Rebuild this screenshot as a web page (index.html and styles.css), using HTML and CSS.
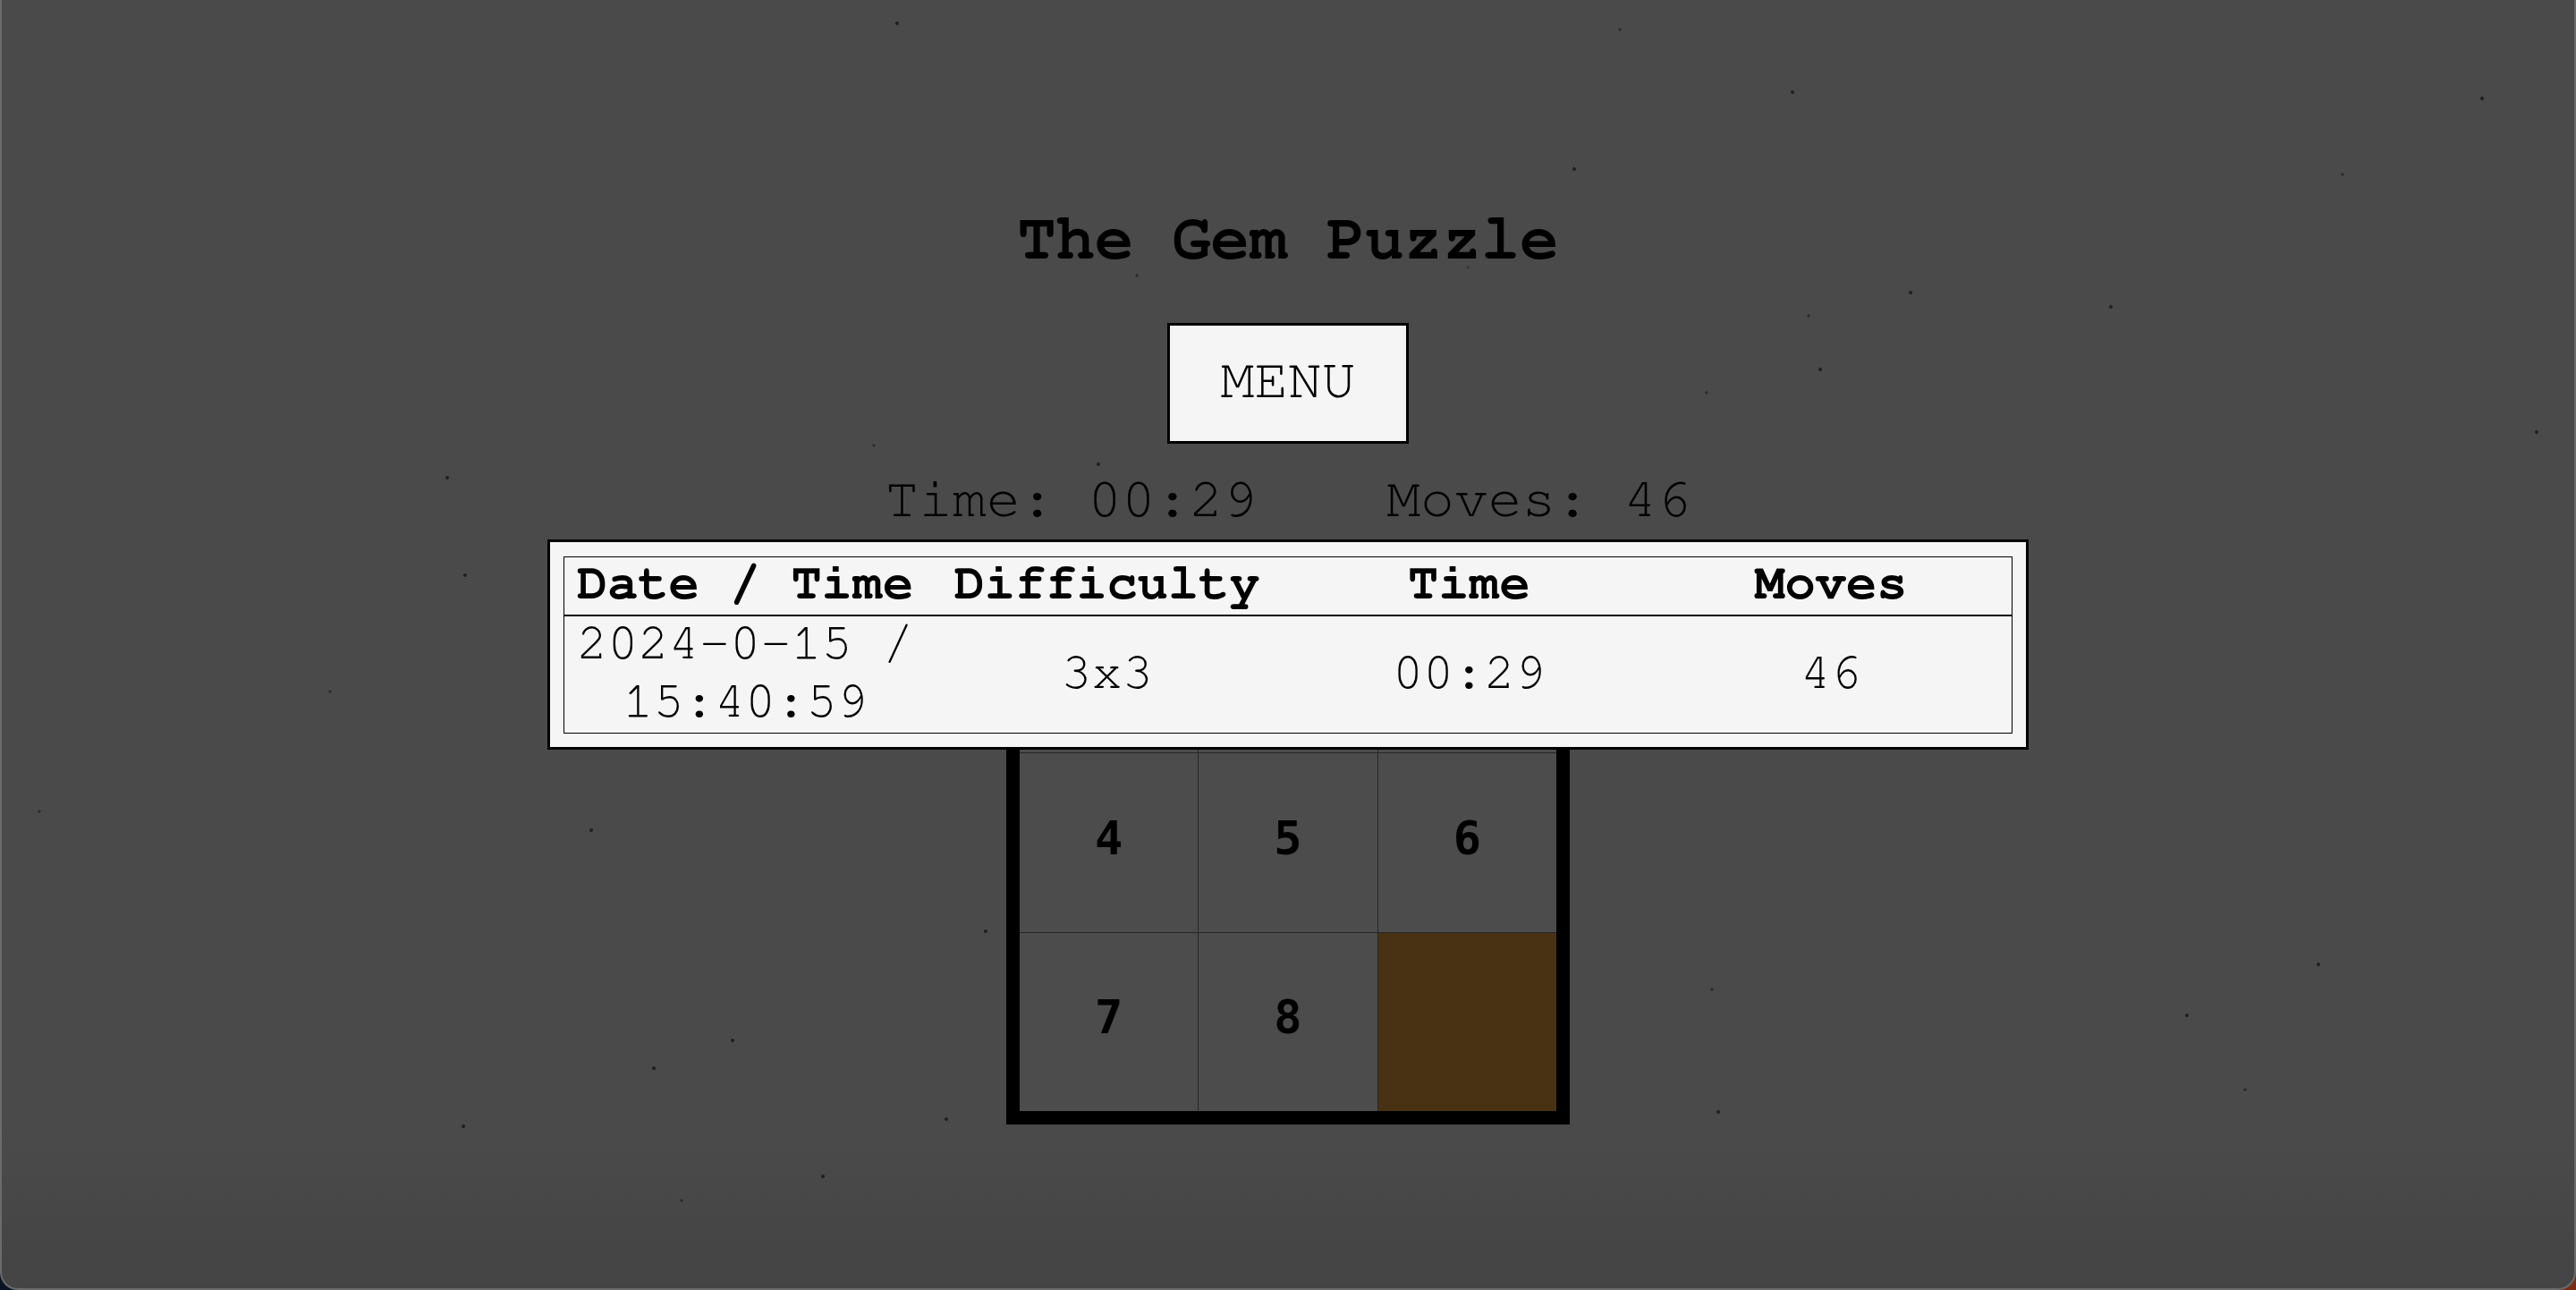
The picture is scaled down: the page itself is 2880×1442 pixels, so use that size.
FILE: index.html
```html
<!DOCTYPE html>
<html lang="en">
<head>
<meta charset="utf-8">
<title>The Gem Puzzle</title>
<link rel="stylesheet" href="styles.css">
</head>
<body>
<div class="window">
  <main class="game">
    <h1 class="title">The Gem Puzzle</h1>
    <button class="menu-btn" type="button">MENU</button>
    <div class="stats">
      <span class="stat">Time: 00:29</span>
      <span class="stat">Moves: 46</span>
    </div>
    <div class="board">
      <div class="tile">1</div>
      <div class="tile">2</div>
      <div class="tile">3</div>
      <div class="tile">4</div>
      <div class="tile">5</div>
      <div class="tile">6</div>
      <div class="tile">7</div>
      <div class="tile">8</div>
      <div class="tile tile-empty"></div>
    </div>
    <div class="results">
      <table class="results-table">
        <thead>
          <tr>
            <th>Date / Time</th>
            <th>Difficulty</th>
            <th>Time</th>
            <th>Moves</th>
          </tr>
        </thead>
        <tbody>
          <tr>
            <td><div class="cell-text">2024-0-15 / 15:40:59</div></td>
            <td><div class="cell-text">3x3</div></td>
            <td><div class="cell-text">00:29</div></td>
            <td><div class="cell-text">46</div></td>
          </tr>
        </tbody>
      </table>
    </div>
  </main>
</div>
</body>
</html>
```

FILE: styles.css
```css
html, body {
  margin: 0;
  padding: 0;
}

body {
  width: 2880px;
  height: 1442px;
  overflow: hidden;
  background: linear-gradient(90deg, #0a1524 0%, #1a1a22 50%, #7a2c12 100%);
  font-family: "Nimbus Mono PS", "Nimbus Mono L", "FreeMono", "Liberation Mono", "Courier New", monospace;
  color: #000;
}

.window {
  box-sizing: border-box;
  width: 2880px;
  height: 1442px;
  border-left: 2px solid #6b6b6b;
  border-right: 2px solid #6b6b6b;
  border-bottom: 2px solid #6b6b6b;
  border-radius: 0 0 20px 20px;
  overflow: hidden;
  background-color: #4a4a4a;
  background-image:
    radial-gradient(circle at 1001px 26px, #202020 0 1.6px, transparent 2.4px),
    radial-gradient(circle at 1809px 33px, #2a2a2a 0 1.2px, transparent 2px),
    radial-gradient(circle at 2002px 103px, #222 0 1.6px, transparent 2.4px),
    radial-gradient(circle at 2773px 110px, #222 0 1.6px, transparent 2.4px),
    radial-gradient(circle at 1758px 189px, #222 0 1.6px, transparent 2.4px),
    radial-gradient(circle at 2617px 195px, #2a2a2a 0 1.2px, transparent 2px),
    radial-gradient(circle at 2134px 327px, #222 0 1.6px, transparent 2.4px),
    radial-gradient(circle at 2358px 343px, #222 0 1.6px, transparent 2.4px),
    radial-gradient(circle at 2020px 353px, #2a2a2a 0 1.2px, transparent 2px),
    radial-gradient(circle at 2033px 413px, #222 0 1.6px, transparent 2.4px),
    radial-gradient(circle at 1906px 439px, #2a2a2a 0 1.2px, transparent 2px),
    radial-gradient(circle at 2834px 483px, #222 0 1.6px, transparent 2.4px),
    radial-gradient(circle at 498px 534px, #222 0 1.6px, transparent 2.4px),
    radial-gradient(circle at 1226px 519px, #222 0 1.6px, transparent 2.4px),
    radial-gradient(circle at 975px 498px, #2a2a2a 0 1.2px, transparent 2px),
    radial-gradient(circle at 1269px 308px, #2a2a2a 0 1.2px, transparent 2px),
    radial-gradient(circle at 1639px 299px, #333 0 1px, transparent 1.8px),
    radial-gradient(circle at 518px 643px, #222 0 1.6px, transparent 2.4px),
    radial-gradient(circle at 367px 773px, #2a2a2a 0 1.2px, transparent 2px),
    radial-gradient(circle at 42px 907px, #2a2a2a 0 1.2px, transparent 2px),
    radial-gradient(circle at 659px 928px, #222 0 1.6px, transparent 2.4px),
    radial-gradient(circle at 1100px 1041px, #222 0 1.6px, transparent 2.4px),
    radial-gradient(circle at 2590px 1078px, #222 0 1.6px, transparent 2.4px),
    radial-gradient(circle at 1912px 1106px, #2a2a2a 0 1.2px, transparent 2px),
    radial-gradient(circle at 2443px 1135px, #222 0 1.6px, transparent 2.4px),
    radial-gradient(circle at 817px 1163px, #222 0 1.6px, transparent 2.4px),
    radial-gradient(circle at 729px 1194px, #222 0 1.6px, transparent 2.4px),
    radial-gradient(circle at 2508px 1218px, #2a2a2a 0 1.2px, transparent 2px),
    radial-gradient(circle at 1919px 1243px, #222 0 1.6px, transparent 2.4px),
    radial-gradient(circle at 1056px 1251px, #222 0 1.6px, transparent 2.4px),
    radial-gradient(circle at 516px 1259px, #222 0 1.6px, transparent 2.4px),
    radial-gradient(circle at 918px 1315px, #222 0 1.6px, transparent 2.4px),
    radial-gradient(circle at 760px 1342px, #2a2a2a 0 1.2px, transparent 2px),
    linear-gradient(180deg, #4a4a4a 0%, #4a4a4a 88%, #444 100%);
}

.game {
  position: relative;
  display: flex;
  flex-direction: column;
  align-items: center;
  padding-top: 226px;
}

.title {
  margin: 0 0 4px;
  font-family: inherit;
  font-weight: bold;
  font-size: 72px;
  line-height: 82px;
  color: #000;
}

.menu-btn {
  margin-top: 49px;
  padding: 26px 56px 32px;
  border: 3px solid #000;
  background: #f5f5f5;
  font-family: inherit;
  font-size: 63px;
  line-height: 71px;
  color: #000;
  cursor: pointer;
}

.stats {
  margin-top: 27px;
  display: flex;
  gap: 145px;
  font-size: 63px;
  line-height: 71px;
}

.board {
  margin-top: 33px;
  width: 600px;
  height: 600px;
  border: 15px solid #000;
  display: grid;
  grid-template-columns: repeat(3, 1fr);
  grid-template-rows: repeat(3, 1fr);
  gap: 1px;
  background: #262626;
  filter: blur(0.6px);
}

.tile {
  display: flex;
  align-items: center;
  justify-content: center;
  background: #4c4c4c;
  font-family: "DejaVu Sans Mono", "Liberation Mono", monospace;
  font-weight: bold;
  font-size: 52px;
  padding-bottom: 10px;
  box-sizing: border-box;
  color: #000;
}

.tile-empty {
  background: #493214;
}

.results {
  position: absolute;
  top: 603px;
  left: 50%;
  transform: translateX(-50%);
  box-sizing: border-box;
  width: 1656px;
  padding: 16px 15px 15px;
  border: 3px solid #000;
  background: #f5f5f5;
}

.results-table {
  width: 100%;
  table-layout: fixed;
  border-collapse: collapse;
  border: 1px solid #000;
  font-family: inherit;
  font-size: 57px;
}

.results-table th,
.results-table td {
  padding: 0;
  text-align: center;
  vertical-align: middle;
}

.results-table th {
  font-weight: bold;
  line-height: 58px;
  padding-bottom: 6px;
  border-bottom: 2px solid #000;
}

.results-table td {
  font-weight: normal;
  line-height: 65px;
}

.cell-text {
  margin: -3px 0 3px;
}
```
